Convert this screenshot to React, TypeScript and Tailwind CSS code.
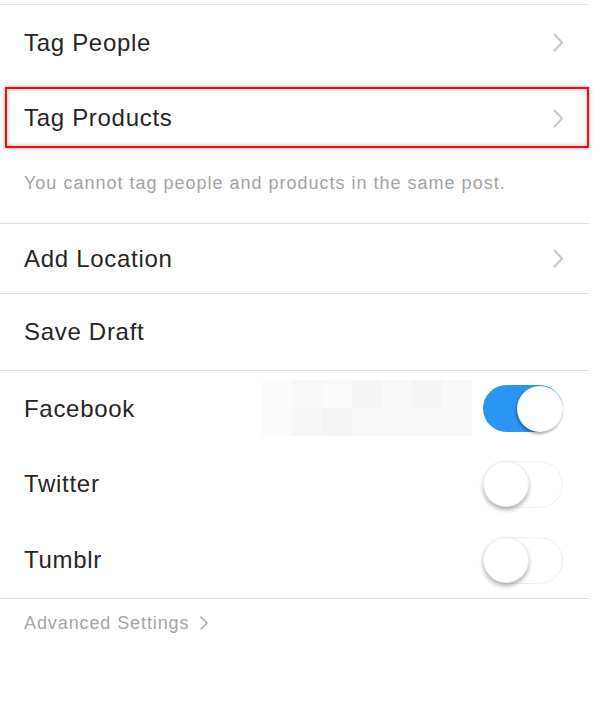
import React from "react";

function Chevron({ className = "" }: { className?: string }) {
  return (
    <svg width="11" height="19" viewBox="0 0 11 19" className={className} fill="none">
      <path d="M1.5 1.5 L9 9.5 L1.5 17.5" stroke="#c9c9c9" strokeWidth="2.2" strokeLinecap="round" strokeLinejoin="round" />
    </svg>
  );
}

function Toggle({ on }: { on: boolean }) {
  if (on) {
    return (
      <div className="relative w-[80px] h-[47px] rounded-full bg-[#2b95f5]">
        <div className="absolute right-0 top-[0.5px] w-[46px] h-[46px] rounded-full bg-white shadow-[-1px_2px_3px_rgba(0,0,0,0.35)]" />
      </div>
    );
  }
  return (
    <div className="relative w-[80px] h-[47px] rounded-full bg-white border border-[#efefef]">
      <div className="absolute -left-[1px] top-[-0.5px] w-[46px] h-[46px] rounded-full bg-white shadow-[0_3px_4px_rgba(0,0,0,0.3)] border border-[#eeeeee]" />
    </div>
  );
}

const mosaic = [
  ["#fcfcfc", "#f8f8f8", "#fafafa", "#f5f5f5", "#f9f9f9", "#f5f5f5", "#f9f9f9"],
  ["#fbfbfb", "#f7f7f7", "#f4f4f4", "#f8f8f8", "#f8f8f8", "#f8f8f8", "#f9f9f9"],
];

export default function App() {
  return (
    <div className="w-[599px] h-[720px] bg-white text-[#262626] font-['Liberation_Sans',Arial,sans-serif] overflow-hidden">
      <div className="w-[589px]">
        <div className="h-[4px]" />
        <div className="h-px bg-[#e3e3e3]" />

        <div className="h-[75px] flex items-center justify-between pl-[24px] pr-[25px]">
          <span className="text-[24px] leading-none tracking-[0.7px]">Tag People</span>
          <Chevron />
        </div>

        <div className="relative h-[76px] flex items-center justify-between pl-[24px] pr-[25px]">
          <span className="text-[24px] leading-none tracking-[0.7px]">Tag Products</span>
          <Chevron />
          <div className="absolute left-[5px] right-0 top-[7px] bottom-[8px] border-2 border-[#ec1010] shadow-[0_0_4px_rgba(0,0,0,0.4),inset_0_0_4px_rgba(0,0,0,0.3)]" />
        </div>

        <div className="h-[67px] pl-[24px] pt-[16px]">
          <span className="text-[18px] leading-[22px] tracking-[1px] text-[#a3a3a3]">
            You cannot tag people and products in the same post.
          </span>
        </div>

        <div className="h-px bg-[#e3e3e3]" />
        <div className="h-[69px] flex items-center justify-between pl-[24px] pr-[25px]">
          <span className="text-[24px] leading-none tracking-[0.7px]">Add Location</span>
          <Chevron />
        </div>

        <div className="h-px bg-[#e3e3e3]" />
        <div className="h-[76px] flex items-center pl-[24px] pr-[25px]">
          <span className="text-[24px] leading-none tracking-[0.7px]">Save Draft</span>
        </div>

        <div className="h-px bg-[#e3e3e3]" />
        <div className="relative h-[75px] flex items-center justify-between pl-[24px] pr-[26px]">
          <span className="text-[24px] leading-none tracking-[0.7px]">Facebook</span>
          <div className="absolute left-[262px] top-[9px] flex flex-col">
            {mosaic.map((row, i) => (
              <div key={i} className="flex">
                {row.map((c, j) => (
                  <div key={j} className="w-[30px] h-[28px]" style={{ backgroundColor: c }} />
                ))}
              </div>
            ))}
          </div>
          <Toggle on />
        </div>

        <div className="h-[76px] flex items-center justify-between pl-[24px] pr-[26px]">
          <span className="text-[24px] leading-none tracking-[0.7px]">Twitter</span>
          <Toggle on={false} />
        </div>

        <div className="h-[76px] flex items-center justify-between pl-[24px] pr-[26px]">
          <span className="text-[24px] leading-none tracking-[0.7px]">Tumblr</span>
          <Toggle on={false} />
        </div>

        <div className="h-px bg-[#e3e3e3]" />
        <div className="flex items-center gap-[11px] pl-[24px] pt-[13px]">
          <span className="text-[18px] leading-[22px] tracking-[0.9px] text-[#a6a6a6]">Advanced Settings</span>
          <svg width="8" height="14" viewBox="0 0 8 14" fill="none">
            <path d="M1 1 L7 7 L1 13" stroke="#a6a6a6" strokeWidth="1.4" strokeLinecap="round" strokeLinejoin="round" />
          </svg>
        </div>
      </div>
    </div>
  );
}
